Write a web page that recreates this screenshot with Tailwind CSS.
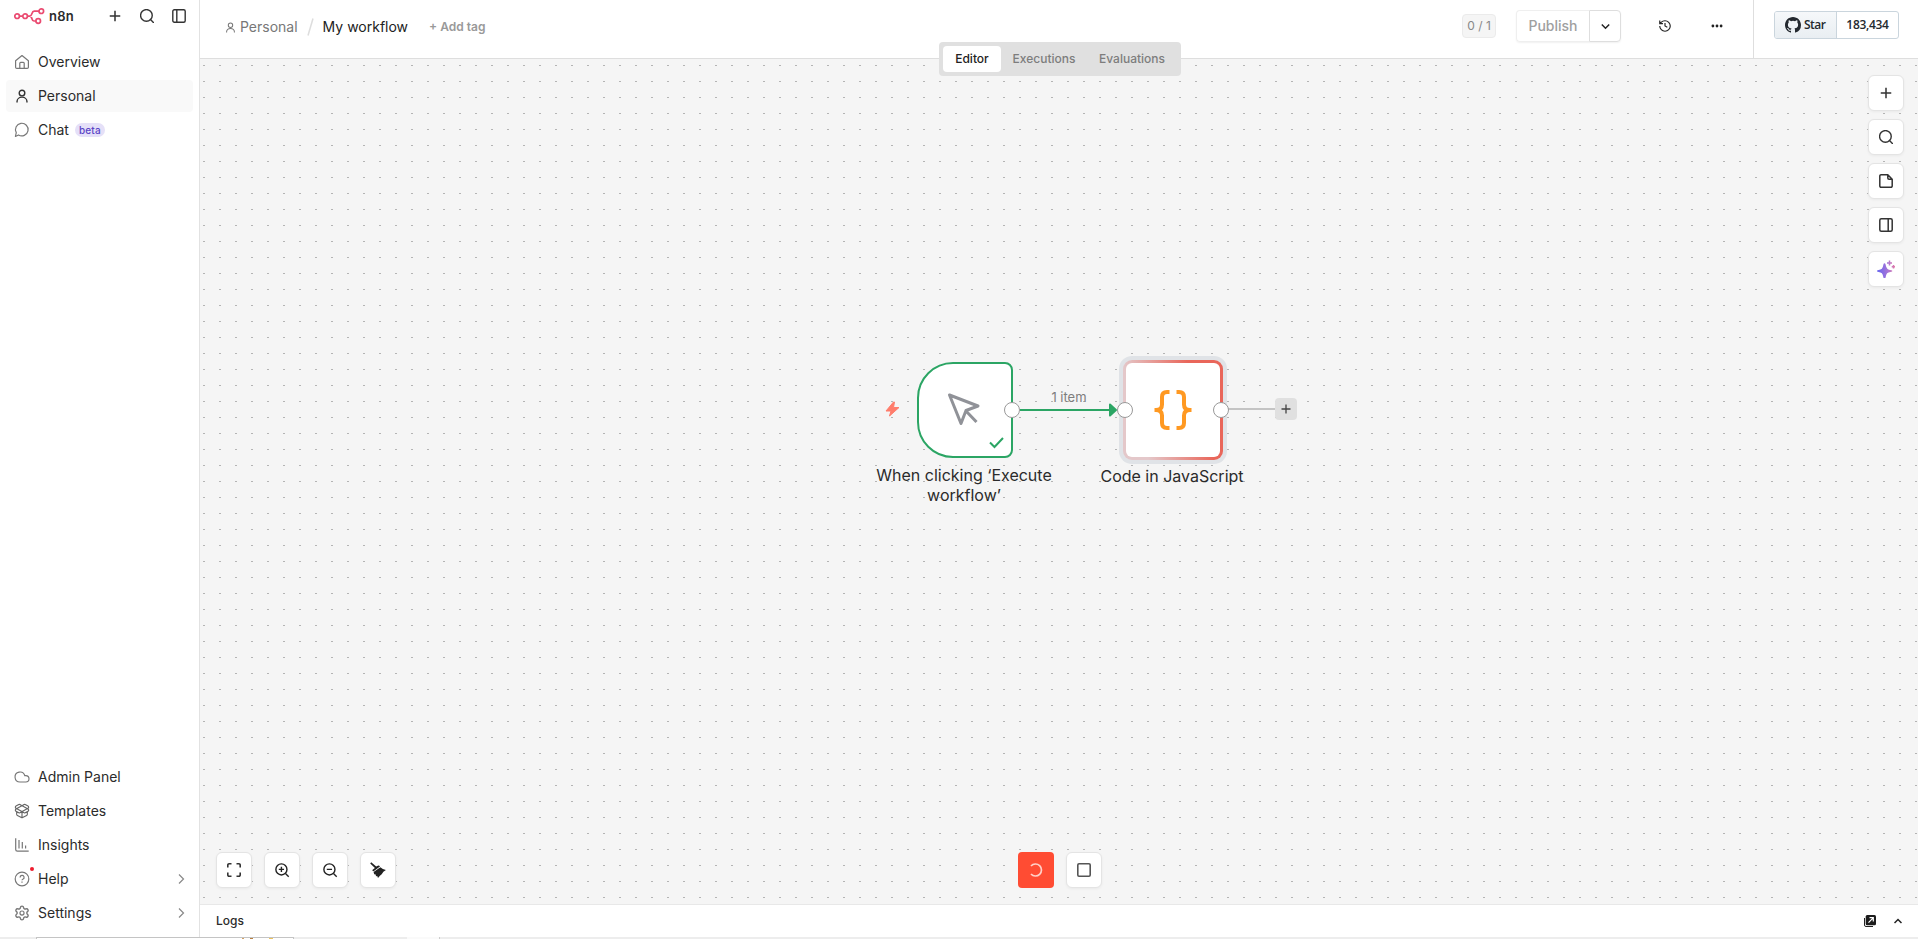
<!DOCTYPE html>
<html lang="en">
<head>
<meta charset="utf-8">
<title>My workflow - n8n</title>
<script src="https://cdn.jsdelivr.net/npm/@tailwindcss/browser@4"></script>
</head>
<body class="h-[939px] w-[1918px] overflow-hidden bg-white font-['Inter',sans-serif] text-sm text-[#2b2b2b]">
<svg class="hidden">
  <defs>
    <symbol id="user" viewBox="0 0 24 24"><circle cx="12" cy="7" r="4.8"/><path d="M3.500 23v-1.500a8.500 7.500 0 0 1 17 0V23"/></symbol>
    <symbol id="plus" viewBox="0 0 24 24"><path d="M3 12h18M12 3v18"/></symbol>
    <symbol id="search" viewBox="0 0 24 24"><circle cx="11" cy="11" r="10"/><path d="m18 18 5 5"/></symbol>
    <symbol id="chev" viewBox="0 0 24 24"><path d="m8 3 9 9-9 9"/></symbol>
  </defs>
</svg>
<div class="flex h-[937px]">
  <aside class="flex w-[200px] shrink-0 flex-col border-r border-[#e2e2e2] px-1.5">
    <header class="flex h-8 items-center pl-2">
      <svg class="h-[17px] w-[31px]" viewBox="0 0 31 17" fill="none" stroke="#ea4b71" stroke-width="1.7"><circle cx="3.1" cy="8.2" r="2.3"/><circle cx="11.1" cy="8.2" r="2.3"/><circle cx="27.3" cy="3.2" r="2.3"/><circle cx="24.2" cy="13" r="2.3"/><path d="M5.4 8.2h3.4M13.4 8.2h2.3c2.8 0 1.5-5 4.5-5H25M15.7 8.2c3 0 1.5 4.8 4.2 4.8h2"/></svg>
      <span class="ml-1 w-[59px] text-[13px] leading-4 font-semibold tracking-[0.2px]">n8n</span>
      <div class="flex items-center gap-[18px]" >
        <svg class="size-3.5" fill="none" stroke="#333" stroke-width="2.6"><use href="#plus"/></svg>
        <svg class="size-3.5 overflow-visible" fill="none" stroke="#333" stroke-width="2.4" stroke-linecap="round"><use href="#search"/></svg>
        <svg class="size-3.5" viewBox="0 0 14 14" fill="none" stroke="#333" stroke-width="1.4"><rect x=".8" y=".8" width="12.4" height="12.4" rx="1.5"/><path d="M4.8 1v12"/></svg>
      </div>
    </header>
    <nav class="mt-3.5 flex flex-col gap-0.5">
      <a class="flex h-8 items-center gap-[9px] px-[9px]">
        <svg class="size-3.5 overflow-visible" viewBox="0 0 14 14" fill="none" stroke="#777" stroke-width="1.2" stroke-linejoin="round"><path d="M.6 5.8 7 .5l6.4 5.3v6.4a1.2 1.2 0 0 1-1.2 1.2H1.8a1.2 1.2 0 0 1-1.2-1.2zM4.8 13.2V8.3q0-.9.9-.9h2.6q.9 0 .9.9v4.9"/></svg>Overview</a>
      <a class="flex h-8 items-center gap-[9px] rounded bg-[#f9f9f9] px-[9px]">
        <svg class="size-3.5 overflow-visible" fill="none" stroke="#333" stroke-width="2.4"><use href="#user"/></svg>Personal</a>
      <a class="flex h-8 items-center gap-[9px] px-[9px]">
        <svg class="size-3.5 overflow-visible" viewBox="0 0 24 24" fill="none" stroke="#777" stroke-width="2" stroke-linejoin="round"><path d="M6 20.5A10.8 10.8 0 1 0 2.2 16.500L.7 23z"/></svg>Chat<span class="-ml-[3px] flex h-3.5 items-center rounded-full bg-[#e5e0f8] px-1 text-[10px] font-medium tracking-[0.15px] text-[#5b45c6]">beta</span></a>
    </nav>
    <nav class="mt-auto mb-2 flex flex-col gap-0.5">
      <a class="flex h-8 items-center gap-[9px] px-[9px]">
        <svg class="size-3.5 overflow-visible" viewBox="0 0 24 24" fill="none" stroke="#777" stroke-width="2"><path d="M18.500 20.500H8.500a8.500 8.500 0 1 1 8.200-11h1.800a5.500 5.500 0 1 1 0 11Z"/></svg>Admin Panel</a>
      <a class="flex h-8 items-center gap-[9px] px-[9px]">
        <svg class="size-3.5 overflow-visible" viewBox="1.500 1.500 21 21" fill="none" stroke="#666" stroke-width="1.700" stroke-linejoin="round"><path d="M12 22v-9M15.170 2.210a1.670 1.670 0 0 1 1.630 0L21 4.570a1.930 1.930 0 0 1 0 3.360L8.820 14.790a1.655 1.655 0 0 1-1.640 0L3 12.430a1.930 1.930 0 0 1 0-3.360zM20 13v3.870a2.060 2.060 0 0 1-1.110 1.830l-6 3.080a1.930 1.930 0 0 1-1.780 0l-6-3.080A2.060 2.060 0 0 1 4 16.870V13M21 12.430a1.930 1.930 0 0 0 0-3.360L8.830 2.200a1.640 1.640 0 0 0-1.630 0L3 4.570a1.930 1.930 0 0 0 0 3.360l12.180 6.860a1.636 1.636 0 0 0 1.630 0z"/></svg>Templates</a>
      <a class="flex h-8 items-center gap-[9px] px-[9px]">
        <svg class="size-3.5 overflow-visible" viewBox="0 0 14 14" fill="none" stroke="#777" stroke-width="1.200"><path d="M.7.300v11.200q0 1.700 1.700 1.700h11.300M4 2v8.500M7.300 4v6.500M10.600 7.500v3"/></svg>Insights</a>
      <a class="flex h-8 items-center gap-[9px] pr-1.5 pl-[9px]">
        <svg class="size-3.5 overflow-visible" viewBox="0 0 14 14" fill="none" stroke="#777" stroke-width="1.200"><circle cx="7" cy="7" r="6.800"/><path d="M5.100 5.400A2 2 0 1 1 7.800 7.200Q7 7.500 7 8.300M7 9.600v1.100"/><circle cx="17" cy="-3" r="2" fill="#ee1c2e" stroke="none"/></svg>Help
        <svg class="ml-auto size-3 overflow-visible" fill="none" stroke="#888" stroke-width="2.400"><use href="#chev"/></svg></a>
      <a class="flex h-8 items-center gap-[9px] pr-1.5 pl-[9px]">
        <svg class="size-3.5 overflow-visible" viewBox="0 0 24 24" fill="none" stroke="#777" stroke-width="2" stroke-linejoin="round"><path d="M9.670 4.140a2.340 2.340 0 0 1 4.660 0 2.340 2.340 0 0 0 3.320 1.910 2.340 2.340 0 0 1 2.330 4.030 2.340 2.340 0 0 0 0 3.830 2.340 2.340 0 0 1-2.330 4.030 2.340 2.340 0 0 0-3.320 1.920 2.340 2.340 0 0 1-4.660 0 2.340 2.340 0 0 0-3.320-1.920 2.340 2.340 0 0 1-2.330-4.030 2.340 2.340 0 0 0 0-3.830 2.340 2.340 0 0 1 2.330-4.030 2.340 2.340 0 0 0 3.320-1.910" transform="translate(12 12) scale(1.180) translate(-12 -12)"/><circle cx="12" cy="12" r="3.500"/></svg>Settings
        <svg class="ml-auto size-3 overflow-visible" fill="none" stroke="#888" stroke-width="2.400"><use href="#chev"/></svg></a>
    </nav>
  </aside>

  <main class="relative flex min-w-0 flex-1 flex-col">
    <header class="flex h-[59px] shrink-0 border-b border-[#dedede]">
      <div class="flex h-[54px] items-center pl-[25px] text-[#777]">
        <svg class="size-[11px] overflow-visible" fill="none" stroke="#777" stroke-width="2.200"><use href="#user"/></svg>
        <span class="ml-1">Personal</span>
        <svg class="mx-[9px] h-[18px] w-[7px]" viewBox="0 0 7 18"><path d="M6 .500 1 17.500" stroke="#ddd" stroke-width="1.500"/></svg>
        <span class="text-[#222]">My workflow</span>
        <span class="ml-[21px] text-xs font-semibold text-[#999]">+ Add tag</span>
      </div>
      <div class="ml-auto flex h-[52px] items-center">
        <span class="flex h-6 w-[34px] items-center justify-center rounded border border-[#ebebeb] bg-[#f5f5f5] text-xs text-[#888]">0 / 1</span>
        <div class="ml-5 flex h-8 rounded shadow-[0_1px_2px_#0000000f]">
          <span class="flex w-[73px] items-center justify-center rounded-l border border-r-0 border-[#efefef] font-medium text-[#a0a0a0]">Publish</span>
          <span class="flex w-8 items-center justify-center rounded-r border border-[#dedede]"><svg class="size-[9px]" viewBox="0 0 9 9" fill="none" stroke="#222" stroke-width="1.500"><path d="m.8 2.500 3.700 3.700 3.700-3.700"/></svg></span>
        </div>
        <svg class="ml-[37px] size-3.5" viewBox="0 0 24 24" fill="none" stroke="#222" stroke-width="2"><path d="M3 12a9 9 0 1 0 9-9 9.750 9.750 0 0 0-6.740 2.740L3 8M3 2.500V8h5.500M12 7v5l4 2"/></svg>
        <svg class="ml-[39px] h-1 w-3" viewBox="0 0 12 4" fill="#222"><circle cx="1.900" cy="2" r="1.400"/><circle cx="6" cy="2" r="1.400"/><circle cx="10.100" cy="2" r="1.400"/></svg>
      </div>
      <div class="ml-[30px] w-[165px] border-l border-[#dedede] pt-[11px] pl-5">
        <div class="flex h-7 w-[125px] overflow-hidden rounded-[3px] border border-[#cad5dd] font-['Open_Sans','Noto_Sans',sans-serif] text-xs font-semibold text-[#24292f]">
          <span class="flex w-[62px] items-center border-r border-[#cad5dd] bg-gradient-to-b from-[#f6f8fa] to-[#e9eef2] pl-2.5"><svg class="mr-[3px] size-4" viewBox="0 0 16 16" fill="#24292f"><path d="M8 0C3.580 0 0 3.580 0 8c0 3.540 2.290 6.530 5.470 7.590.4.070.55-.17.55-.38 0-.19-.01-.82-.01-1.490-2.010.37-2.530-.49-2.690-.94-.09-.23-.48-.94-.82-1.130-.28-.15-.68-.52-.01-.53.63-.01 1.080.58 1.230.82.720 1.210 1.870.87 2.330.66.070-.52.280-.87.510-1.070-1.780-.2-3.640-.89-3.640-3.950 0-.87.310-1.590.82-2.150-.08-.2-.36-1.020.08-2.120 0 0 .67-.21 2.200.82a7.700 7.700 0 0 1 4 0c1.530-1.040 2.200-.82 2.200-.82.44 1.100.16 1.920.08 2.120.51.560.82 1.270.82 2.150 0 3.070-1.870 3.750-3.650 3.950.29.250.54.730.54 1.480 0 1.070-.01 1.930-.01 2.200 0 .21.150.46.550.38A8 8 0 0 0 16 8c0-4.420-3.580-8-8-8z"/></svg><span class="tracking-[-0.500px]">Star</span></span>
          <span class="flex flex-1 items-center justify-center tracking-[-0.300px]">183,434</span>
        </div>
      </div>
    </header>

    <!-- view switcher straddles the header's lower edge -->
    <div class="absolute top-[42px] left-[739px] z-10 flex h-[34px] w-[242px] rounded bg-[#e0e0e0] p-1 text-xs font-medium text-[#7d7d7d]">
      <span class="flex w-[58px] items-center justify-center rounded bg-white text-[#222]">Editor</span>
      <span class="flex w-[86px] items-center justify-center">Executions</span>
      <span class="flex w-[90px] items-center justify-center">Evaluations</span>
    </div>

    <section class="relative flex-1 overflow-hidden bg-[#f5f5f5]">
      <svg class="absolute inset-0 size-full" viewBox="200 59 1718 845">
        <defs><pattern id="dots" x="203" y="65" width="16" height="16" patternUnits="userSpaceOnUse"><rect width="2" height="1" fill="#b4b4b4"/></pattern></defs>
        <rect x="200" y="59" width="1718" height="845" fill="url(#dots)"/>
        <path d="M1020 410h90" stroke="#2ba564" stroke-width="2"/>
        <path d="M1110 404.500 1116 410l-6 5.500z" fill="#2ba564" stroke="#2ba564" stroke-width="2" stroke-linejoin="round"/>
        <path d="M1228 409h47" stroke="#c4c4c4" stroke-width="2"/>
        <path d="M893.500 402 886 411h5l-1.500 5 9.500-8.500h-5.500l1-5.500z" fill="#ff7d6c" stroke="#ff7d6c" stroke-linejoin="round"/>
      </svg>
      <!-- trigger node -->
      <div class="absolute top-[303px] left-[717px] size-24 rounded-l-[36px] rounded-r-lg border-2 border-[#2ba564] bg-white">
        <svg class="absolute inset-0 size-full overflow-visible" viewBox="919 364 92 92" fill="none" stroke="#909298" stroke-width="3" stroke-linejoin="round" stroke-linecap="butt"><path d="m949.500 395 28.500 11-12 4.500-5 13zM966 411l10.500 11"/><path d="m990 442.500 4.500 4.500 8.500-9" stroke="#2ba564" stroke-width="2" stroke-linejoin="miter"/></svg>
      </div>
      <div class="absolute top-[406px] left-[668px] w-48 text-center text-base leading-5">When clicking ‘Execute workflow’</div>
      <div class="absolute top-[330px] left-[847px] w-11 text-center text-[13px] leading-4 text-[#7d7d7d]">1 item</div>
      <!-- running code node -->
      <div class="absolute top-[297px] left-[919px] size-[108px] rounded-[13px] bg-[#e0e3e7] p-1">
        <div class="size-full rounded-[9px] bg-[linear-gradient(75deg,#e4c8ca_20%,#e9665a_72%)] p-[3px]">
          <div class="flex size-full items-center justify-center rounded-md bg-white">
            <svg class="h-10 w-[38px]" viewBox="0 0 38 40" fill="none" stroke="#ff9922" stroke-width="4"><path d="M15.500 2H13Q8 2 8 7v7.500Q8 20 2 20h-1.500M15.500 38H13Q8 38 8 33v-7.500Q8 20 2 20M22.500 2H25Q30 2 30 7v7.500Q30 20 36 20h1.500M22.500 38H25Q30 38 30 33v-7.500Q30 20 36 20"/></svg>
          </div>
        </div>
      </div>
      <div class="absolute top-[407px] left-[876px] w-48 text-center text-base leading-5">Code in JavaScript</div>
      <i class="absolute top-[343px] left-[804px] size-4 rounded-full border border-[#999] bg-white"></i>
      <i class="absolute top-[343px] left-[917px] size-4 rounded-full border border-[#999] bg-white"></i>
      <i class="absolute top-[343px] left-[1013px] size-4 rounded-full border border-[#999] bg-white"></i>
      <span class="absolute top-[339px] left-[1075px] flex size-[22px] items-center justify-center rounded bg-[#e0e0e0]"><svg class="size-3" fill="none" stroke="#444" stroke-width="2.600"><use href="#plus"/></svg></span>

      <!-- right-hand tools -->
      <div class="absolute top-4 right-3.5 flex flex-col gap-2 *:flex *:size-9 *:items-center *:justify-center *:rounded-md *:border *:border-[#e4e4e4] *:bg-white *:shadow-[0_1px_3px_#0000000d]">
        <span><svg class="size-3.5" fill="none" stroke="#333" stroke-width="2.600"><use href="#plus"/></svg></span>
        <span><svg class="size-3.5 overflow-visible" fill="none" stroke="#333" stroke-width="2.400" stroke-linecap="round"><use href="#search"/></svg></span>
        <span><svg class="size-3.5" viewBox="0 0 14 14" fill="none" stroke="#333" stroke-width="1.500" stroke-linejoin="round"><path d="M8.800.800H2A1.200 1.200 0 0 0 .8 2v10A1.200 1.200 0 0 0 2 13.200h10a1.200 1.200 0 0 0 1.200-1.200V5.200zM8.800.800V4q0 1.200 1.200 1.200h3.200"/></svg></span>
        <span><svg class="size-3.5" viewBox="0 0 14 14" fill="none" stroke="#333" stroke-width="1.500"><rect x=".8" y=".8" width="12.400" height="12.400" rx="1.500"/><path d="M9.200 1v12"/></svg></span>
        <span><svg class="size-[18px]" viewBox="0 0 18 18"><defs><linearGradient id="ai" gradientUnits="userSpaceOnUse" x1="1" y1="10" x2="18" y2="9"><stop stop-color="#6b66ee"/><stop offset=".55" stop-color="#a474d8"/><stop offset="1" stop-color="#e17ba8"/></linearGradient></defs><path fill="url(#ai)" d="M7.500 3.200Q8.200 3.200 8.500 4.200 9.300 8.200 10.500 9 11.500 9.800 14.300 10.200 15.300 10.400 15.300 11T14.300 11.800Q10.900 12.400 10.100 13.300T8.500 17.800Q8.200 18.600 7.500 18.600T6.500 17.800Q5.700 14.200 4.900 13.300T.7 11.800Q0 11.600 0 11T.7 10.200Q4 9.700 4.900 8.800T6.500 4.200Q6.800 3.200 7.500 3.200z"/><path stroke="url(#ai)" stroke-width="1.500" d="M12.500.500v5M10 3.100h5M16.500 5v3.500M14.700 6.700h3.300"/></svg></span>
      </div>

      <div class="absolute bottom-4 left-4 flex gap-3 *:flex *:size-9 *:items-center *:justify-center *:rounded-md *:border *:border-[#e4e4e4] *:bg-white *:shadow-[0_1px_3px_#0000000d]">
        <span><svg class="size-3.5" viewBox="0 0 14 14" fill="none" stroke="#333" stroke-width="1.600"><path d="M.8 4.500V2A1.200 1.200 0 0 1 2 .8h2.500M9.500.800H12A1.200 1.200 0 0 1 13.200 2v2.500M13.200 9.500V12a1.200 1.200 0 0 1-1.200 1.200H9.500M4.500 13.200H2A1.200 1.200 0 0 1 .8 12V9.500"/></svg></span>
        <span><svg class="size-3.5 overflow-visible" fill="none" stroke="#222" stroke-width="2.400" viewBox="0 0 24 24"><circle cx="11" cy="11" r="9.500"/><path d="m18 18 5.500 5.500M6.500 11h9M11 6.500v9"/></svg></span>
        <span><svg class="size-3.5 overflow-visible" fill="none" stroke="#222" stroke-width="2.400" viewBox="0 0 24 24"><circle cx="11" cy="11" r="9.500"/><path d="m18 18 5.500 5.500M6.500 11h9"/></svg></span>
        <span><svg class="size-4" viewBox="0 0 16 16" fill="#222"><path d="M1.200.2 6.200 4.600 8.300 3.400Q9.500 3.500 10 4.600L3.600 9.300Q2.300 9 2.400 7.900L4.900 5.900.2 1.500zM3.600 10 10.400 5.200Q12.500 7.400 15.900 7.900 13 9.200 11.700 12.200 10 13.500 8 16L7.200 14 6 14.200 5.700 12.500 4.200 12.200z"/></svg></span>
      </div>

      <div class="absolute bottom-4 left-[818px] flex gap-3 *:flex *:size-9 *:items-center *:justify-center">
        <span class="rounded bg-[#ff4c33]"><svg class="size-3.5" viewBox="0 0 14 14" fill="none" stroke="#ffd0c8" stroke-width="1.700"><path d="M2 3A6 6 0 1 1 2 11"/></svg></span>
        <span class="rounded-md border border-[#e4e4e4] bg-white shadow-[0_1px_3px_#0000000d]"><svg class="size-3.5" viewBox="0 0 14 14" fill="none" stroke="#555" stroke-width="1.600"><rect x=".8" y=".8" width="12.400" height="12.400" rx="1.200"/></svg></span>
      </div>
    </section>

    <footer class="flex h-[33px] shrink-0 items-center border-t border-[#e8e8e8] bg-white pr-4 pl-4 text-xs font-medium">
      Logs
      <svg class="ml-auto size-3" viewBox="0 0 12 12"><path d="M.5 3v7q0 1.500 1.500 1.500h7" fill="none" stroke="#222"/><rect x="1.700" y="0" width="10.300" height="10.300" rx="1.500" fill="#1c1c1c"/><path d="m4.500 7.700 4.700-4.900M5.500 2.700h3.800v3.800" fill="none" stroke="#fff" stroke-width="1.200"/></svg>
      <svg class="ml-[18px] h-[6px] w-2" viewBox="0 0 8 6" fill="none" stroke="#222" stroke-width="1.500"><path d="m.5 5L4 1.500 7.500 5"/></svg>
    </footer>
  </main>
</div>
<div class="flex h-0.5 bg-[#ededed]">
  <i class="w-9"></i>
  <i class="flex w-[258px] border border-b-0 border-[#c4c4c4] bg-white pl-[205px]"><i class="h-px w-0.5 bg-[#d3a064]"></i><i class="ml-1.5 h-px w-[3px] bg-[#b88040]"></i><i class="ml-4 h-px w-1 bg-[#ecc35c]"></i></i>
  <i class="ml-[113px] w-8 bg-[#fafafa]"></i><i class="w-px bg-[#ccc]"></i>
</div>
</body>
</html>
